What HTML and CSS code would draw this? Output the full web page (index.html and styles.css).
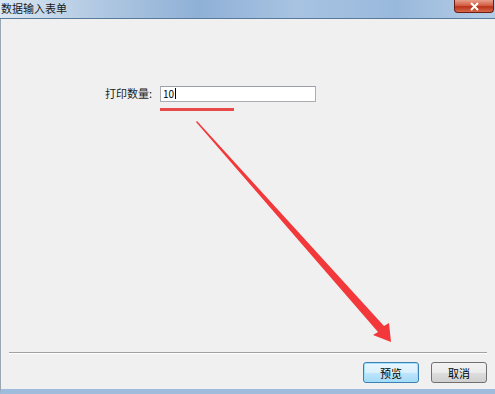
FILE: index.html
```
<!DOCTYPE html>
<html>

<head>
    <title>数据输入表单</title>

    <link rel="stylesheet" href="styles.css">
</head>

<body>

    <div class="window">

        <div class="titlebar">
            <span class="title">数据输入表单</span>
            <button class="btn-close" type="button">
                <svg width="11" height="9" viewBox="0 0 11 9">
                    <path d="M2 1 L9 8 M9 1 L2 8" stroke="#fff" stroke-width="2" fill="none" />
                </svg>
            </button>
        </div>

        <main class="client">

            <form class="form-area">
                <div class="form-row">
                    <label for="printCount">打印数量:</label>
                    <div class="field">
                        <div class="input-box">
                            <input type="text" id="printCount" name="printCount" value="10">
                            <span class="caret"></span>
                        </div>
                        <span class="mark"></span>
                    </div>
                </div>
            </form>

            <div class="separator"></div>

            <div class="button-row">
                <button type="submit" class="btn btn-default">预览</button>
                <button type="button" class="btn">取消</button>
            </div>

            <svg class="annotation" width="495" height="394" viewBox="0 0 495 394">
                <polygon points="196,123 197,122 384,327 389,324 391,343 373,336 378,333" fill="#f2383a" />
            </svg>

        </main>

    </div>

</body>

</html>
```

FILE: styles.css
```
* {
    margin: 0;
    padding: 0;
    box-sizing: border-box;
}

html,
body {
    width: 100%;
    height: 100%;
}

body {
    font-family: "Noto Sans CJK SC", "Liberation Sans", sans-serif;
    font-size: 11px;
    color: #000;
    background-color: #f0f0f0;
}

.window {
    width: 495px;
    height: 394px;
    display: flex;
    flex-direction: column;
    background-color: #a9c4e0;
}

.titlebar {
    height: 19px;
    display: flex;
    justify-content: space-between;
    align-items: flex-start;
    background: linear-gradient(90deg, #dbe7f3 0%, #b4cbe3 18%, #8fb0d6 40%, #a8c3e2 60%, #99b9dc 80%, #b5cde6 100%);
    border-bottom: 1px solid #5a7a9c;
}

.title {
    font-size: 11px;
    line-height: 17px;
    padding-left: 1px;
    color: #1a1a1a;
}

.btn-close {
    width: 40px;
    height: 13px;
    margin-right: 1px;
    border: 1px solid #6b1e14;
    border-top: none;
    border-radius: 0 0 4px 4px;
    background: linear-gradient(180deg, #e8a08c 0%, #d0573c 50%, #b9321a 55%, #d66a48 100%);
    display: flex;
    align-items: center;
    justify-content: center;
}

.client {
    position: relative;
    flex: 1;
    display: flex;
    flex-direction: column;
    background-color: #f0f0f0;
    border-left: 1px solid #9aa6b2;
    border-bottom: 5px solid #9fbcdc;
}

.form-area {
    flex: 1;
    padding: 66px 0 0 104px;
}

.form-row {
    display: flex;
    align-items: flex-start;
}

.form-row label {
    font-size: 11px;
    line-height: 16px;
    width: 55px;
    color: #222;
}

.field {
    display: flex;
    flex-direction: column;
}

.input-box {
    position: relative;
}

.field input {
    width: 156px;
    height: 16px;
    border: 1px solid #abadb3;
    border-top-color: #9ba0a8;
    background-color: #fff;
    font-family: "Noto Sans CJK SC", "Liberation Sans", sans-serif;
    font-size: 10px;
    padding: 0 2px;
    outline: none;
}

.caret {
    position: absolute;
    left: 15px;
    top: 3px;
    width: 1px;
    height: 11px;
    background-color: #000;
}

.mark {
    width: 74px;
    height: 3px;
    margin-top: 6px;
    background-color: #e84a4a;
}

.separator {
    height: 2px;
    margin: 0 8px 0 8px;
    border-top: 1px solid #a0a0a0;
    border-bottom: 1px solid #ffffff;
}

.button-row {
    display: flex;
    justify-content: flex-end;
    gap: 12px;
    padding: 8px 8px 6px 0;
}

.btn {
    width: 56px;
    height: 21px;
    font-family: "Noto Sans CJK SC", "Liberation Sans", sans-serif;
    font-size: 11px;
    border: 1px solid #707070;
    border-radius: 3px;
    background: linear-gradient(180deg, #f2f2f2 0%, #ebebeb 50%, #dddddd 51%, #cfcfcf 100%);
    color: #000;
}

.btn-default {
    border-color: #3c7fb1;
    background: linear-gradient(180deg, #eaf6fd 0%, #d9f0fc 50%, #bee6fd 51%, #a7d9f5 100%);
    box-shadow: inset 0 0 0 1px #9fe0fb;
}

.annotation {
    position: absolute;
    left: -1px;
    top: -20px;
    pointer-events: none;
}
```
